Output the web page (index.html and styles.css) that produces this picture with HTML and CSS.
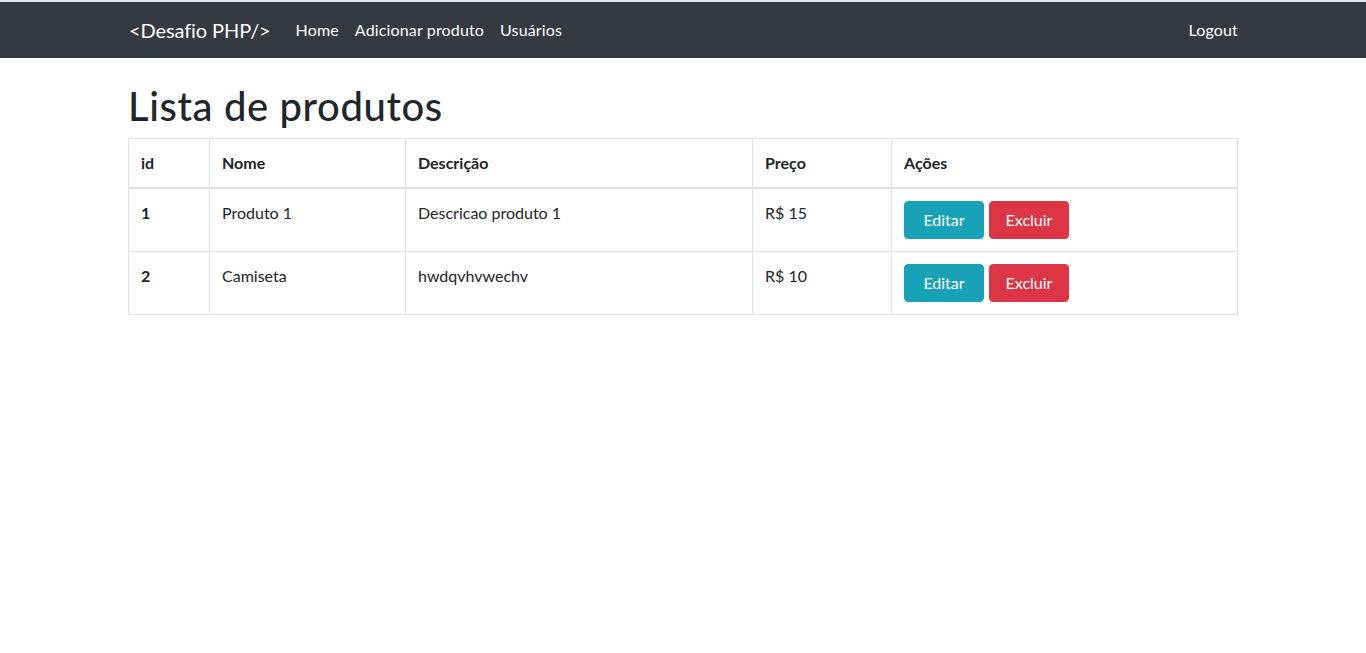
FILE: index.html
```html
<!DOCTYPE html>
<html lang="pt-BR">
<head>
<meta charset="utf-8">
<title>Lista de produtos</title>
<link rel="stylesheet" href="styles.css">
</head>
<body>
<nav class="navbar">
  <div class="container nav-inner">
    <a class="brand" href="#">&lt;Desafio PHP/&gt;</a>
    <ul class="nav-links">
      <li><a href="#">Home</a></li>
      <li><a href="#">Adicionar produto</a></li>
      <li><a href="#">Usuários</a></li>
    </ul>
    <ul class="nav-links nav-right">
      <li><a href="#">Logout</a></li>
    </ul>
  </div>
</nav>
<main class="container main">
  <h1 class="title">Lista de produtos</h1>
  <table class="table">
    <thead>
      <tr>
        <th class="c-id">id</th>
        <th class="c-nome">Nome</th>
        <th class="c-desc">Descrição</th>
        <th class="c-preco">Preço</th>
        <th class="c-acoes">Ações</th>
      </tr>
    </thead>
    <tbody>
      <tr>
        <th>1</th>
        <td>Produto 1</td>
        <td>Descricao produto 1</td>
        <td>R$ 15</td>
        <td><a class="btn btn-info" href="#">Editar</a><a class="btn btn-danger" href="#">Excluir</a></td>
      </tr>
      <tr>
        <th>2</th>
        <td>Camiseta</td>
        <td>hwdqvhvwechv</td>
        <td>R$ 10</td>
        <td><a class="btn btn-info" href="#">Editar</a><a class="btn btn-danger" href="#">Excluir</a></td>
      </tr>
    </tbody>
  </table>
</main>
</body>
</html>
```
FILE: styles.css
```css
* { box-sizing: border-box; }
html, body { margin: 0; padding: 0; }
body {
  font-family: "Lato", "Noto Sans", sans-serif;
  font-size: 16px;
  line-height: 1.5;
  color: #212529;
  background: #fff;
  border-top: 2px solid #e4e4e4;
}
a { text-decoration: none; }
.container {
  width: 1140px;
  margin: 0 auto;
  padding: 0 15px;
}
.navbar {
  background: #343a40;
  padding: 8px 0;
}
.nav-inner {
  display: flex;
  align-items: center;
}
.brand {
  color: #fff;
  font-size: 20px;
  line-height: 30px;
  padding: 5px 0;
  margin-right: 17px;
  margin-left: 1px;
  letter-spacing: -0.1px;
}
.nav-links {
  display: flex;
  list-style: none;
  margin: 0;
  padding: 0;
}
.nav-links a {
  display: block;
  color: #fff;
  padding: 8px;
  line-height: 24px;
  letter-spacing: 0.15px;
}
.nav-right { margin-left: auto; }
.nav-right a { padding-right: 0; }
.main { padding-top: 24px; }
.title {
  font-size: 40px;
  font-weight: 500;
  line-height: 1.2;
  margin: 0 0 8px;
  letter-spacing: 0.6px;
}
.table {
  width: 100%;
  border-collapse: collapse;
  color: #212529;
}
.table th, .table td {
  border: 1px solid #dee2e6;
  padding: 12px;
  vertical-align: top;
  text-align: left;
}
.table thead th {
  border-bottom: 2px solid #dee2e6;
  font-weight: 700;
}
.table tbody th { font-weight: 700; }
.c-id { width: 81px; }
.c-nome { width: 196px; }
.c-desc { width: 347px; }
.c-preco { width: 139px; }
.btn {
  display: inline-block;
  width: 80px;
  text-align: center;
  padding: 6px 12px;
  line-height: 24px;
  border: 1px solid transparent;
  border-radius: 4px;
  color: #fff;
  font-size: 16px;
}
.btn + .btn { margin-left: 5px; }
.btn-info { background: #17a2b8; border-color: #17a2b8; }
.btn-danger { background: #dc3545; border-color: #dc3545; }
```
